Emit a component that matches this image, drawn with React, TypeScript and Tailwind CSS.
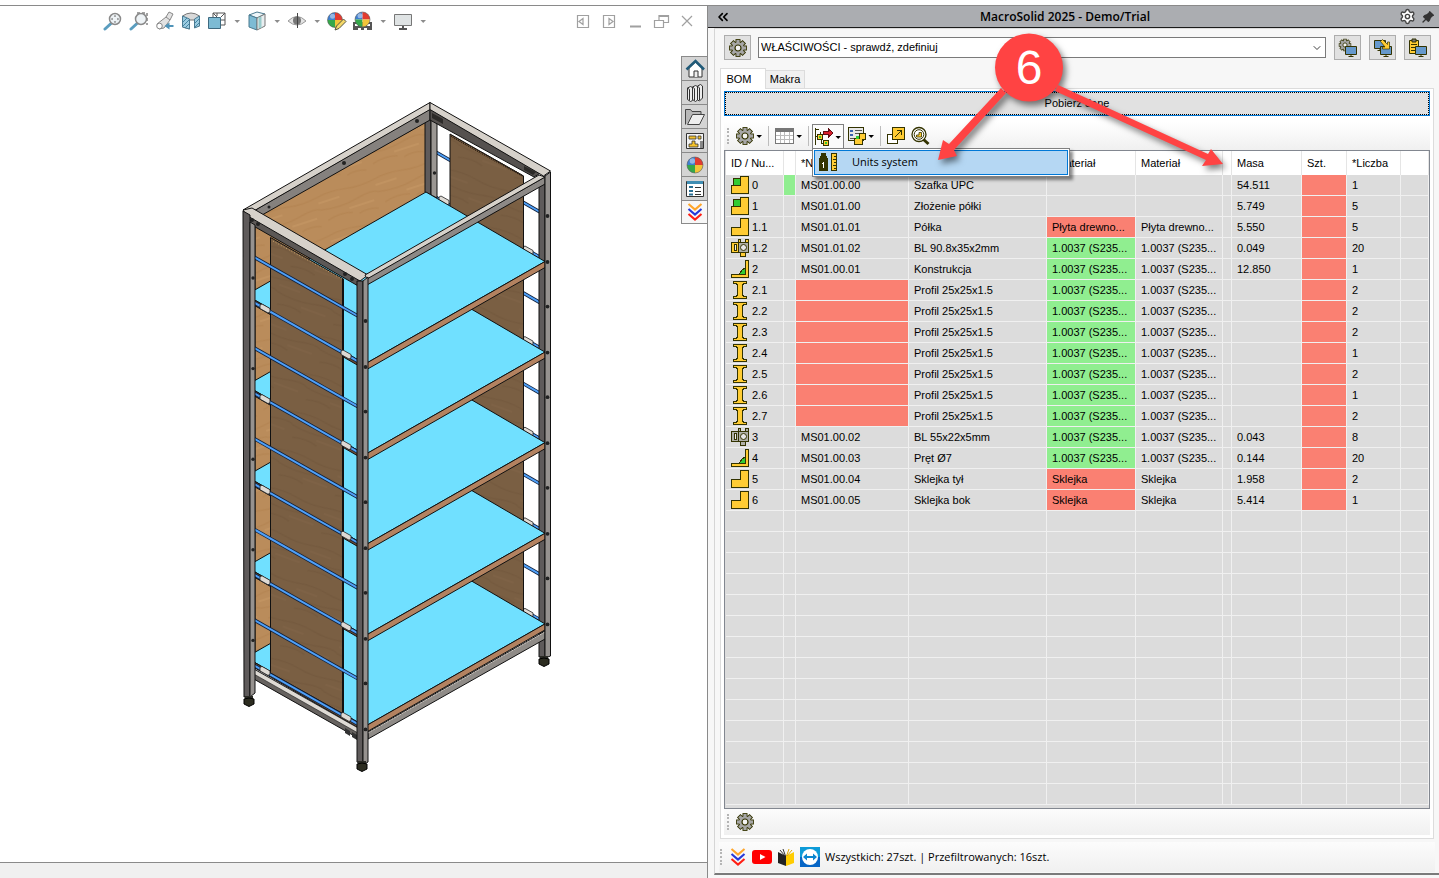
import { useState } from 'react';
import type { ReactNode } from 'react';
import { ChevronDown, ChevronsLeft, Settings } from 'lucide-react';
import { TbPinFilled } from 'react-icons/tb';

const OLIVE = '#333300';
const YELLOW = '#ffcc33';

type Kind = 'asm' | 'part' | 'buyYellow' | 'buy' | 'weld' | 'beam';
type Tone = '' | 'red' | 'green';

interface Row {
  id: string;
  kind: Kind;
  no: string;
  name: string;
  mat: string;
  tone: Tone;
  mass: string;
  qty: string;
}

const STEEL = '1.0037 (S235...';
const beam = (id: string, qty: string): Row => ({ id, kind: 'beam', no: '', name: 'Profil 25x25x1.5', mat: STEEL, tone: 'green', mass: '', qty });

const rows: Row[] = [
  { id: '0', kind: 'asm', no: 'MS01.00.00', name: 'Szafka UPC', mat: '', tone: '', mass: '54.511', qty: '1' },
  { id: '1', kind: 'asm', no: 'MS01.01.00', name: 'Złożenie półki', mat: '', tone: '', mass: '5.749', qty: '5' },
  { id: '1.1', kind: 'part', no: 'MS01.01.01', name: 'Półka', mat: 'Płyta drewno...', tone: 'red', mass: '5.550', qty: '5' },
  { id: '1.2', kind: 'buyYellow', no: 'MS01.01.02', name: 'BL 90.8x35x2mm', mat: STEEL, tone: 'green', mass: '0.049', qty: '20' },
  { id: '2', kind: 'weld', no: 'MS01.00.01', name: 'Konstrukcja', mat: STEEL, tone: 'green', mass: '12.850', qty: '1' },
  beam('2.1', '2'),
  beam('2.2', '2'),
  beam('2.3', '2'),
  beam('2.4', '1'),
  beam('2.5', '2'),
  beam('2.6', '1'),
  beam('2.7', '2'),
  { id: '3', kind: 'buy', no: 'MS01.00.02', name: 'BL 55x22x5mm', mat: STEEL, tone: 'green', mass: '0.043', qty: '8' },
  { id: '4', kind: 'weld', no: 'MS01.00.03', name: 'Pręt Ø7', mat: STEEL, tone: 'green', mass: '0.144', qty: '20' },
  { id: '5', kind: 'part', no: 'MS01.00.04', name: 'Sklejka tył', mat: 'Sklejka', tone: 'red', mass: '1.958', qty: '2' },
  { id: '6', kind: 'part', no: 'MS01.00.05', name: 'Sklejka bok', mat: 'Sklejka', tone: 'red', mass: '5.414', qty: '1' },
];

const toneClass: Record<Tone, string> = { '': '', red: 'bg-[#fa8072]', green: 'bg-[#90ee90]' };

/* ---------- small icons ---------- */

function Svg({ children, size = 20, crisp = false }: { children: ReactNode; size?: number; crisp?: boolean }) {
  return (
    <svg width={size} height={size} viewBox={`0 0 ${size} ${size}`} className="shrink-0" shapeRendering={crisp ? 'crispEdges' : undefined} aria-hidden="true">
      {children}
    </svg>
  );
}

function GearShape({ cx, cy, s = 1 }: { cx: number; cy: number; s?: number }) {
  const teeth = [0, 45, 90, 135, 180, 225, 270, 315];
  const body = (
    <>
      <circle r="5.800" />
      {teeth.map((a) => <rect key={a} x="-1.6" y="-8" width="3.2" height="4" transform={`rotate(${a})`} />)}
    </>
  );
  return (
    <g transform={`translate(${cx} ${cy}) scale(${s})`}>
      <g fill={OLIVE} stroke={OLIVE} strokeWidth="1.8">{body}</g>
      <g fill="#a6a6a6">{body}</g>
      <circle r="3" fill="#f4f4f4" stroke={OLIVE} strokeWidth="1.2" />
    </g>
  );
}

const Gear = () => <Svg><GearShape cx={10} cy={10} /></Svg>;

function Caret({ className = 'text-black' }: { className?: string }) {
  return (
    <svg width="8" height="8" viewBox="0 0 8 8" className={className} aria-hidden="true">
      <path d="M1.500 3h5.500L4.200 6z" fill="currentColor" />
    </svg>
  );
}

function Chevrons({ size = 20 }: { size?: number }) {
  return (
    <svg width={size} height={size} viewBox="0 0 20 20" fill="none" strokeWidth="2.1" className="shrink-0" aria-hidden="true">
      <path d="M3.5 2l6.500 5.500L16.500 2" stroke="#ffa62b" />
      <path d="M3.500 7l6.500 5.500L16.500 7" stroke="#2638d8" />
      <path d="M3.500 12l6.500 5.500L16.500 12" stroke="#ff1e14" />
    </svg>
  );
}

function Sphere({ cx = 10, cy = 10, r = 8 }: { cx?: number; cy?: number; r?: number }) {
  return (
    <g transform={`translate(${cx} ${cy})`}>
      <path d={`M0 0V${-r}A${r} ${r} 0 0 0 ${-r} 0z`} fill="#3f7fd0" />
      <path d={`M0 0V${-r}A${r} ${r} 0 0 1 ${r} 0z`} fill="#e23b30" />
      <path d={`M0 0V${r}A${r} ${r} 0 0 1 ${-r} 0z`} fill="#35a84a" />
      <path d={`M0 0V${r}A${r} ${r} 0 0 0 ${r} 0z`} fill="#f2c53a" />
      <circle cx={-r / 3} cy={-r / 2} r={r / 3} fill="#fff" opacity=".45" />
      <circle r={r} fill="none" stroke="#555" strokeWidth=".8" opacity=".7" />
    </g>
  );
}

function RowIcon({ kind }: { kind: Kind }) {
  return (
    <svg width="18" height="18" viewBox="0 0 18 18" className="shrink-0" shapeRendering="crispEdges" stroke={OLIVE} fill={YELLOW} aria-hidden="true">
      {(kind === 'part' || kind === 'asm') && <path d="M.5 9.500h9v-9h8v17H.500z" />}
      {kind === 'asm' && <path d="M2.500 2.500h7v7h-7z" fill="#33cc33" />}
      {kind === 'beam' && <path d="M2.500.500h13v2h-2l-2 1v11l2 1h2v2h-13v-2h2l2-1v-11l-2-1h-2z" />}
      {kind === 'weld' && (
        <>
          <path d="M14.500.500h3v17H.500v-3h14z" />
          <path d="M14.500 8v6.500H8.500c1-3 3-5.500 6-6.500z" fill="#33cc33" />
        </>
      )}
      {(kind === 'buy' || kind === 'buyYellow') && (
        <>
          <path d="M.500 3.500h7v10h-7z" fill={kind === 'buy' ? '#b0b0a8' : YELLOW} />
          <path d="M3.500 5.500h2v6h-2z" fill="#eee" />
          <path d="M7.500.500h2v3h5v-3h3v13h-3v4h-5v-4h-2z" fill={kind === 'buy' ? '#b0b0a8' : YELLOW} />
          <path d="M7.500 3.500h10v10h-10z" fill="#b0b0a8" />
          <circle cx="12.500" cy="8.500" r="3" fill="#e6e6e6" shapeRendering="auto" />
        </>
      )}
    </svg>
  );
}

const Monitor = ({ x, y }: { x: number; y: number }) => (
  <g stroke={OLIVE}>
    <path d={`M${x} ${y}h11v8h-11z`} fill="#6699cc" />
    <path d={`M${x + 5.5} ${y + 8}v2M${x + 3} ${y + 10}h5`} fill="none" />
  </g>
);

/* ---------- left viewport toolbar ---------- */

const lens = (
  <>
    <path d="M2 18l6-5.500" stroke="#5a9dbf" strokeWidth="3" strokeLinecap="round" />
    <circle cx="12" cy="8" r="5.500" fill="#eef3f6" stroke="#8a8a8a" strokeWidth="1.500" />
  </>
);

const viewTools: { label: string; menu?: boolean; icon: ReactNode }[] = [
  { label: 'Zoom to Fit', icon: <>{lens}<path d="M12 4l1.200 1.500h-2.400zM12 12l1.200-1.500h-2.400zM8 8l1.500-1.200v2.400zM16 8l-1.500-1.200v2.400z" fill="#555" /></> },
  { label: 'Zoom to Area', icon: <><path d="M8 2h10v12" fill="none" stroke="#444" strokeDasharray="3 2" />{lens}</> },
  { label: 'Previous View', icon: <><path d="M2 13l9-7 3-5 4 2-3 6-6 8-5 1z" fill="#e2e2e2" stroke="#888" /><path d="M11 6l4 3" stroke="#888" /><circle cx="4.500" cy="15" r="2.800" fill="#fff" stroke="#888" /><path d="M18.500 14h-4v-2.500L9.500 15l5 3.500V16h4z" fill="#4f93b8" /></> },
  { label: 'Section View', icon: <><path d="M1.500 5q8.500-6 17 0v10l-5 1V9h-5v9l-7-2z" fill="#d9d9d9" stroke="#777" /><path d="M1.500 5l7 3v10l-7-2zM13.500 8l5-3v10l-5 2z" fill="#9ccbe0" stroke="#4a7a92" /><path d="M2 11l4-4M2 15l6-6M4 17l4-4M14 12l4-4M14 16l4-4" stroke="#4585a3" /></> },
  { label: 'View Orientation', menu: true, icon: <><path d="M6 6V2h12v12h-4M14 6l4-4M6 2l4 4M10 2v3M14 9h4" fill="none" stroke="#555" /><path d="M1.500 6.500h12v11h-12z" fill="#7dbbd4" stroke="#3e6a80" /></> },
  { label: 'Display Style', menu: true, icon: <><path d="M2 4l8-3 8 2-8 4z" fill="#eef6f9" stroke="#4b7a8f" /><path d="M2 4l8 3v12l-8-3z" fill="#7dbbd4" stroke="#4b7a8f" /><path d="M10 7l8-4v12l-8 4z" fill="#e9eef0" stroke="#777" /><path d="M13 6v11" stroke="#9cc" strokeWidth="3" /></> },
  { label: 'Hide/Show Items', menu: true, icon: <><path d="M1 10q9-9 18 0-9 8-18 0z" fill="#e4e4e4" stroke="#999" /><circle cx="10" cy="9.500" r="4" fill="#777" /><path d="M10.500 2v15" stroke="#444" /></> },
  { label: 'Edit Appearance', icon: <><Sphere cx={8} cy={9} r={7.500} /><path d="M8 19l1.500-4 7-7 2.500 2.500-7 7z" fill="#f4d868" stroke="#554" /></> },
  { label: 'Apply Scene', menu: true, icon: <><path d="M0 11h19v8H0z" fill="#555" /><path d="M2 13h3v2H2zM5 17h3v2H5zM14 13h3v2h-3zM11 17h3v2h-3z" fill="#fff" /><Sphere cx={9.500} cy={8.500} r={7.500} /></> },
  { label: 'View Settings', menu: true, icon: <><path d="M1.500 3.500h17v11h-17z" fill="#dfe3e4" stroke="#777" /><path d="M10 15v3M6 18h8" stroke="#555" strokeWidth="2" /></> },
];

const windowTools: { label: string; d: string }[] = [
  { label: 'Previous pane', d: 'M4.500 4.500h11v12h-11zM10 7.500v6l-4-3z' },
  { label: 'Next pane', d: 'M4.500 4.500h11v12h-11zM10 7.500v6l4-3z' },
  { label: 'Minimize', d: 'M5 16h11M5 15h11' },
  { label: 'Restore', d: 'M3.500 9.500h9v7h-9zM8 9V4.500h9.500v7H13M8 5.500h9' },
  { label: 'Close', d: 'M5 5l10 10M15 5L5 15' },
];

const taskTabs: { label: string; icon: ReactNode }[] = [
  { label: 'Home', icon: <><path d="M4 9v9h13V9l-6.500-6z" fill="#fff" stroke="#333" /><path d="M9 18v-6h4v6" fill="#eee" stroke="#333" /><path d="M1.500 10.500l9-8.500 8.500 8.500" fill="none" stroke="#205a78" strokeWidth="2.600" /></> },
  { label: 'Design Library', icon: <g fill="#eee" stroke="#333"><path d="M2.500 5l3-1.500 2 1v13l-2 1-3-2z" /><path d="M7.500 4l3-1.500 2 1v13.500l-2 1.500-3-2z" /><path d="M12.500 3l3-1.500 2 1.500v12l-3 3-2-1z" /><path d="M2.500 5l2 1.500v11M7.500 4l2 1.500v12M12.500 3l2 2v12" fill="none" /></g> },
  { label: 'File Explorer', icon: <><path d="M.500 17.500v-15h5l1.500 2h9v4" fill="#b8b8b8" stroke="#444" /><path d="M2.500 17.500l5-10h12l-5 10z" fill="#eee" stroke="#444" /></> },
  { label: 'View Palette', icon: <><path d="M1.500 2.500h17v15h-17z" fill="#f3f3f3" stroke="#333" /><path d="M4 5h7v3H4zM13 5h3v3h-3zM7 10h3v3h3v3H4v-3h3z" fill="#f5c32c" stroke="#333" strokeWidth=".8" /><path d="M15 10h3v7h-3z" fill="#888" /></> },
  { label: 'Appearances', icon: <Sphere /> },
  { label: 'Custom Properties', icon: <><path d="M1.500 2.500h17v15h-17z" fill="#fff" stroke="#333" /><path d="M2 2h16v3H2z" fill="#3f8db3" /><path d="M4 7h4v2H4zM4 11h4v2H4zM4 14.500h4v2H4z" fill="#2a6f93" /><path d="M10 8.500h6M10 12.500h6M10 15.500h6" stroke="#333" /></> },
  { label: 'MacroSolid', icon: <Chevrons /> },
];

/* ---------- 3D model of the cabinet ---------- */

const PITCH = 90.6;
const shelves = [4, 3, 2, 1, 0].map((i) => i * PITCH);
const rodSteps = [0, 1, 2, 3, 4, 5, 6, 7, 8, 9];

function Rod({ x1, y1, x2, y2 }: { x1: number; y1: number; x2: number; y2: number }) {
  return (
    <>
      <path d={`M${x1} ${y1}L${x2} ${y2}`} stroke="#10203c" strokeWidth="3.600" />
      <path d={`M${x1} ${y1}L${x2} ${y2}`} stroke="#4fa0f8" strokeWidth="2" />
    </>
  );
}

function Clip({ x, y }: { x: number; y: number }) {
  return <path d={`M${x} ${y}l8 4.500v3.500l-2 1-8-4.500V${y + 1}z`} fill="#dedad4" stroke="#222" strokeWidth=".8" />;
}

function Foot({ x, y }: { x: number; y: number }) {
  return (
    <>
      <path d={`M${x - 4} ${y - 3}h8v5h-8z`} fill="#2a2a24" />
      <path d={`M${x - 5} ${y}l5-1 5 1v5l-5 2.500-5-2.500z`} fill="#2c2c20" stroke="#000" />
    </>
  );
}

function CabinetModel() {
  return (
    <svg viewBox="0 56 681 806" preserveAspectRatio="xMinYMin meet" className="h-full w-full" role="img" aria-label="Szafka UPC" strokeLinejoin="round">
      <defs>
        <pattern id="oak" width="60" height="40" patternUnits="userSpaceOnUse" patternTransform="rotate(-18)">
          <rect width="60" height="40" fill="#ba8c5b" />
          <path d="M0 6q15-3 30 0t30 0M0 19q20 4 38 0t22 0M4 31q14-4 26 0M36 34q10-3 20 1" fill="none" stroke="#aa7a48" strokeWidth="1.400" opacity=".35" />
          <path d="M0 12h22M28 26h26" stroke="#cb9c69" strokeWidth="2" opacity=".4" />
        </pattern>
        <pattern id="walnut" width="60" height="40" patternUnits="userSpaceOnUse" patternTransform="rotate(20)">
          <rect width="60" height="40" fill="#7a5f43" />
          <path d="M0 6q15-3 30 0t30 0M0 19q20 4 38 0t22 0M4 31q14-4 26 0" fill="none" stroke="#6b4f34" strokeWidth="1.400" opacity=".3" />
          <path d="M0 12h22M28 26h26" stroke="#86694a" strokeWidth="2" opacity=".3" />
        </pattern>
      </defs>

      {/* back side: rods, plywood sheets and the rear post */}
      {rodSteps.map((k) => <Rod key={k} x1={434} y1={151 + k * 45.3} x2={540} y2={212 + k * 45.3} />)}
      {shelves.map((dy) => <g key={dy}><Clip x={441} y={196 + dy} /><Clip x={525} y={246 + dy} /></g>)}
      <path d="M450 134l73.500 42v450l-73.500-42z" fill="url(#walnut)" stroke="#111" />
      <path d="M255 217l171-95v450l-171 95z" fill="url(#oak)" stroke="#111" />
      <path d="M425 116h6v79l-6-3z" fill="#5f5b5b" stroke="#111" />
      <path d="M431 116h6v82l-6-3z" fill="#9b9793" stroke="#111" />
      <circle cx="434.500" cy="173" r="1.700" fill="#222" />
      <path d="M539 180h6v477h-6z" fill="#5f5b5b" stroke="#111" />

      {shelves.map((dy) => (
        <g key={dy} transform={`translate(0 ${dy})`} stroke="#111">
          <path d="M426 192l119 69.500L365 364 246 295z" fill="#70e0ff" />
          <path d="M545 261.500v6L365 370.500V364z" fill="#b38260" />
          <path d="M246 295l119 69v5.500L246 300.500z" fill="#6e4f35" />
        </g>
      ))}

      {/* bottom frame */}
      <path d="M368 732l177-101v8L368 739z" fill="#8f8b87" stroke="#111" />
      <path d="M368 733l177-101" stroke="#c9c5c0" strokeDasharray="2 1" />
      <path d="M252 668l106 60v10l-106-60z" fill="#66625f" stroke="#111" />
      <path d="M252 668l106 60v5l-106-60z" fill="#dedad4" stroke="#111" strokeWidth=".6" />
      <path d="M345 728l5 3v5l-5-3zM352 732l5 3v5l-5-3zM251 674l4 2v4l-4-2z" fill="#333" />

      {/* left side panel */}
      <path d="M270.500 237.500l73 41.500v435l-73-41z" fill="url(#walnut)" stroke="#111" />
      <path d="M343 279v434" stroke="#111" strokeWidth="2" />
      {rodSteps.map((k) => <Rod key={k} x1={252} y1={256 + k * 45.35} x2={358} y2={316 + k * 45.35} />)}
      {shelves.map((dy) => <g key={dy}><Clip x={262} y={304 + dy} /><Clip x={343} y={350 + dy} /></g>)}

      {/* top frame */}
      <path d="M250 213l180-104v11l-175 99z" fill="#85817e" stroke="#111" />
      <path d="M430 109l112 63-8 5-104-57z" fill="#55514f" stroke="#111" />
      <path d="M243 210l187-107.500v7L252 212z" fill="#d6d1ca" stroke="#111" />
      <path d="M430 102.500L550.500 171l-7 5L430 109.500z" fill="#d6d1ca" stroke="#111" />
      <path d="M246 214l114 66v7l-110-63z" fill="#5c5856" stroke="#111" />
      <path d="M243 210l9-2 116 67-8 6-114-66z" fill="#d6d1ca" stroke="#111" />
      <path d="M367 278l178-101v7L367 285z" fill="#8d8986" stroke="#111" />
      <path d="M365 275l174-100 6 2-178 102z" fill="#d6d1ca" stroke="#111" />
      <path d="M432 113l11 6v5l-11-6zM524 166l12 6-3 3-9-5z" fill="#2c2a28" />
      <path d="M273 241l69 38" stroke="#c9a36b" strokeDasharray="1 2" />
      <path d="M451 136l72 40" stroke="#2c1d10" strokeWidth="2" strokeDasharray="1 1" />
      <g fill="#222">
        <circle cx="252" cy="220" r="2" /><circle cx="258" cy="224" r="2" /><circle cx="345" cy="274" r="2" />
        <circle cx="352" cy="279" r="2" /><circle cx="344" cy="163" r="2" /><circle cx="417" cy="121" r="2" /><circle cx="269" cy="207" r="1.500" />
      </g>

      {/* posts */}
      <path d="M243 211l7 4v482h-6z" fill="#5f5b5b" stroke="#111" />
      <path d="M250 222l5 3v468l-5 4z" fill="#96928f" stroke="#111" />
      <path d="M357 281h6v484l-6-3z" fill="#5f5b5b" stroke="#111" />
      <path d="M363 281l5-4v485l-5 3z" fill="#96928f" stroke="#111" />
      <path d="M545 176l5.500-4v484l-5.500 2z" fill="#96928f" stroke="#111" />
      <g fill="#222">
        {shelves.map((dy) => (
          <g key={dy}>
            <circle cx="253" cy={278 + dy} r="1.700" />
            <circle cx="365.500" cy={321 + dy} r="1.900" />
            <circle cx="365.500" cy={367 + dy} r="1.900" />
            <circle cx="547.500" cy={216 + dy} r="1.900" />
            <circle cx="547.500" cy={262 + dy} r="1.900" />
          </g>
        ))}
      </g>
      <Foot x={249} y={699} />
      <Foot x={362} y={764} />
      <Foot x={544} y={659} />
    </svg>
  );
}

function Viewport() {
  return (
    <section className="flex min-w-0 flex-col border-r border-[#8a8a8a] bg-white">
      <div className="flex h-[50px] shrink-0 items-start justify-between pt-[5px] pr-[10px] pl-[103px]">
        <div className="flex items-center gap-1.5">
          {viewTools.map((tool) => (
            <button key={tool.label} type="button" aria-label={tool.label} className="flex items-center gap-1.5">
              <Svg>{tool.icon}</Svg>
              {tool.menu && <Caret className="text-[#8c8c8c]" />}
            </button>
          ))}
        </div>
        <div className="flex items-center gap-1.5">
          {windowTools.map((tool) => (
            <button key={tool.label} type="button" aria-label={tool.label}>
              <Svg><path d={tool.d} fill="none" stroke="#a0a0a0" strokeWidth="1.200" /></Svg>
            </button>
          ))}
        </div>
      </div>
      <div className="flex min-h-0 flex-1">
        <div className="min-w-0 flex-1"><CabinetModel /></div>
        <nav className="w-[26px] shrink-0">
          {taskTabs.map((tab, i) => (
            <button
              key={tab.label}
              type="button"
              aria-label={tab.label}
              className={`flex h-6 w-full items-center justify-center border-t border-l border-[#8a8a8a] ${i === taskTabs.length - 1 ? 'border-b bg-[#f7f7f7]' : 'bg-[#d4d4d4]'}`}
            >
              <Svg>{tab.icon}</Svg>
            </button>
          ))}
        </nav>
      </div>
      <div className="h-4 shrink-0 border-t border-[#8a8a8a] bg-[#f0f0f0]" />
    </section>
  );
}

/* ---------- MacroSolid panel ---------- */

const Grip = () => <span className="h-4 w-0.5 shrink-0 border-l-2 border-dotted border-[#b5b5b5]" />;
const Divider = () => <span className="mr-[3px] ml-[5px] h-5 w-px shrink-0 bg-[#bdbdbd]" />;

function BomToolbar() {
  const [menuOpen, setMenuOpen] = useState(true);
  return (
    <div className="mt-1.5 flex h-7 shrink-0 items-center bg-linear-to-b from-white to-[#f0f0f0] pl-[3px]">
      <Grip />
      <button type="button" aria-label="Ustawienia" className="ml-1.5 flex items-center"><Gear /><Caret /></button>
      <Divider />
      <button type="button" aria-label="Tabela" className="ml-[3px] flex items-center">
        <Svg crisp>
          <path d="M.500 2.500h18v15H.500z" fill="#fff" stroke="#777" />
          <path d="M1 3h17v3H1z" fill="#777" />
          <path d="M1 9.500h17M1 13.500h17M5.500 6v11M9.500 6v11M14.500 6v11" stroke="#bbb" />
        </Svg>
        <Caret />
      </button>
      <Divider />
      <div className="relative">
        <button type="button" aria-label="Struktura" onClick={() => setMenuOpen(!menuOpen)} className="flex h-[25px] items-center border border-b-0 border-[#808080] bg-[#fbfbfb] px-px">
          <Svg crisp>
            <path d="M1.500 1v17M1.500 2.500h3M1.500 9.500h2M7.500 12v4.500h2M6.500 5v3" stroke={OLIVE} fill="none" />
            <path d="M3.500 7.500h5v5h-5zM9.500 13.500h5v5h-5z" fill={YELLOW} stroke={OLIVE} />
            <path d="M5 9h2v2H5zM11 15h2v2h-2z" fill="#33cc33" />
            <path d="M9.500 4.500h5v-2.500l4.500 4-4.500 4v-2.500h-5z" fill="#d81e2c" stroke="#5c0d12" />
          </Svg>
          <Caret />
        </button>
        {menuOpen && (
          <div role="menu" className="absolute top-6 left-0 z-10 w-[258px] border border-[#808080] bg-white p-px shadow-[3px_3px_3px_rgba(0,0,0,0.45)]">
            <button type="button" role="menuitem" className="flex h-[25px] w-full items-center border border-[#0078d7] bg-[#b5d7f3] pl-[3px] font-['Open_Sans',sans-serif] text-[11px] text-black">
              <Svg crisp>
                <path d="M3 1h5v3H3zM2 4h7v3H2z" fill={OLIVE} />
                <path d="M1 6h9v13H1z" fill={OLIVE} />
                <path d="M5 10h1v6H5zM4 11h1v1H4z" fill="#fff" />
                <path d="M13.500 1.500h5v17h-5z" fill={YELLOW} stroke={OLIVE} />
                <path d="M16 4.500h2M15 7.500h3M16 10.500h2M15 13.500h3M16 16.500h2" stroke={OLIVE} />
              </Svg>
              <span className="ml-[14px]">Units system</span>
            </button>
          </div>
        )}
      </div>
      <button type="button" aria-label="Właściwości" className="ml-[3px] flex items-center">
        <Svg crisp>
          <path d="M1.500 1.500h15v13h-15z" fill="#e8e8e8" stroke={OLIVE} />
          <path d="M3 4h3v2H3zM3 8h3v2H3z" fill="#3a62b0" />
          <path d="M8 4.500h7M8 7.500h4M3 12.500h4" stroke="#555" />
          <path d="M7.500 12.500h5v-5h6v6h-3v5h-8z" fill={YELLOW} stroke={OLIVE} />
          <path d="M9 10h3v3H9z" fill="#33cc33" />
        </Svg>
        <Caret />
      </button>
      <Divider />
      <button type="button" aria-label="Otwórz" className="ml-0.5">
        <Svg crisp>
          <path d="M1.500 8.500h10v9h-10z" fill="#fff" stroke={OLIVE} />
          <path d="M6.500 1.500h12v12h-12z" fill={YELLOW} stroke={OLIVE} />
          <path d="M9 11l6-6M11 4.500h4.500V9" fill="none" stroke={OLIVE} />
        </Svg>
      </button>
      <button type="button" aria-label="Szukaj" className="ml-1">
        <Svg>
          <path d="M13 13l5.500 5" stroke={OLIVE} strokeWidth="3" />
          <circle cx="9" cy="8.500" r="7" fill="#fff" stroke={OLIVE} strokeWidth="1.300" />
          <circle cx="9" cy="8.500" r="4.800" fill="none" stroke={OLIVE} />
          <path d="M6.500 9H9V6.500h2.500V11h-5z" fill={YELLOW} stroke={OLIVE} strokeWidth=".8" />
        </Svg>
      </button>
    </div>
  );
}

const headers = ['ID / Nu...', '', '*Numer', '*Nazwa', '*Materiał', 'Materiał', '', 'Masa', 'Szt.', '*Liczba', ''];
const emptyRows = Array.from({ length: 14 }, (_, i) => i);
const cell = 'h-[21px] border-r border-b border-[#f0f0f0] p-0 pl-[5px] whitespace-nowrap overflow-hidden';

function BomTable() {
  return (
    <div className="min-h-0 flex-1 overflow-hidden border border-[#828790] bg-[#dcdcdc] pl-px">
      <table className="w-full table-fixed border-separate border-spacing-0">
        <colgroup>
          <col className="w-[58px]" />
          <col className="w-[12px]" />
          <col className="w-[113px]" />
          <col className="w-[138px]" />
          <col className="w-[89px]" />
          <col className="w-[87px]" />
          <col className="w-[9px]" />
          <col className="w-[70px]" />
          <col className="w-[45px]" />
          <col className="w-[54px]" />
          <col />
        </colgroup>
        <thead>
          <tr>
            {headers.map((h, i) => (
              <th key={i} className="h-6 overflow-hidden border-r border-[#e5e5e5] bg-white p-0 pl-[5px] text-left font-normal whitespace-nowrap">{h}</th>
            ))}
          </tr>
        </thead>
        <tbody>
          {rows.map((row) => (
            <tr key={row.id}>
              <td className={cell}>
                <span className="flex h-5 items-center gap-[3px]"><RowIcon kind={row.kind} />{row.id}</span>
              </td>
              <td className={`${cell} ${row.id === '0' ? 'bg-[#90ee90]' : ''}`} />
              <td className={`${cell} ${row.no ? '' : 'bg-[#fa8072]'}`}>{row.no}</td>
              <td className={cell}>{row.name}</td>
              <td className={`${cell} ${toneClass[row.tone]}`}>{row.mat}</td>
              <td className={cell}>{row.mat}</td>
              <td className={cell} />
              <td className={cell}>{row.mass}</td>
              <td className={`${cell} bg-[#fa8072]`} />
              <td className={cell}>{row.qty}</td>
              <td className={cell} />
            </tr>
          ))}
          {emptyRows.map((n) => (
            <tr key={n}>{headers.map((_, i) => <td key={i} className={cell} />)}</tr>
          ))}
        </tbody>
      </table>
    </div>
  );
}

function StatusBar() {
  return (
    <footer className="mx-1 mt-[3px] mb-px flex h-[30px] shrink-0 items-center bg-linear-to-b from-[#fcfcfc] to-[#f0f0f0] pl-px">
      <Grip />
      <a href="#macrosolid" aria-label="MacroSolid" className="ml-[6px]"><Chevrons /></a>
      <a href="#youtube" aria-label="YouTube" className="ml-1">
        <Svg><rect y="3" width="20" height="14" rx="3" fill="#f00" /><path d="M8 7l5.500 3L8 13z" fill="#fff" /></Svg>
      </a>
      <a href="#docs" aria-label="Dokumentacja" className="ml-1">
        <Svg>
          <path d="M2 5l8 4v10l-8-3z" fill="#222" />
          <path d="M18 5l-8 4v10l8-3z" fill="#fc0" />
          <path d="M4 3l5 6M7 2l2.500 7" stroke="#333" />
          <path d="M16 3l-5 6M13 2l-2.500 7" stroke="#e0a800" />
        </Svg>
      </a>
      <a href="#support" aria-label="Pomoc zdalna" className="ml-1">
        <Svg>
          <rect width="20" height="10" fill="#0e9bd8" />
          <rect y="10" width="20" height="10" fill="#0766c6" />
          <circle cx="10" cy="10" r="8" fill="#fff" />
          <path d="M3 10l4-3.500V9h6V6.500l4 3.500-4 3.500V11H7v2.500z" fill="#0a86d0" />
        </Svg>
      </a>
      <p className="ml-[5px] font-['Open_Sans',sans-serif] text-[11px]">Wszystkich: 27szt. | Przefiltrowanych: 16szt.</p>
    </footer>
  );
}

const squareButton = 'flex h-[25px] w-[27px] shrink-0 items-center justify-center border border-[#adadad] bg-[#e1e1e1]';

function Callout() {
  return (
    <svg width="300" height="150" viewBox="935 30 300 150" className="pointer-events-none absolute top-6 left-[227px] z-20 overflow-visible" aria-label="6">
      <g fill="#ff4343" style={{ filter: 'drop-shadow(3px 4px 3px rgba(0,0,0,.5))' }}>
        <path d="M1001 88l5 5-52 57 3 6-19 4 5-20 6 4z" />
        <path d="M1058 85l-3 6 151 69-4 6 21-2-12-15-3 5z" />
        <circle cx="1029" cy="67.500" r="34" />
      </g>
      <text x="1029" y="84" textAnchor="middle" fontSize="48" fill="#fff" fontFamily="Liberation Sans, sans-serif">6</text>
    </svg>
  );
}

function MacroPanel() {
  const [tab, setTab] = useState('BOM');
  return (
    <section className="relative flex min-w-0 flex-col bg-[#f7f7f7]">
      <header className="flex h-[22px] shrink-0 items-center border-b border-[#1a1a1a] bg-[#abadb1] pr-[3px] pl-[7px]">
        <button type="button" aria-label="Zwiń"><ChevronsLeft size={16} strokeWidth={2.500} /></button>
        <h1 className="flex-1 text-center font-['Open_Sans',sans-serif] text-[12px] font-semibold">MacroSolid 2025 - Demo/Trial</h1>
        <button type="button" aria-label="Opcje" className="mr-1"><Settings size={17} strokeWidth={2} stroke="#444" fill="#fff" /></button>
        <button type="button" aria-label="Przypnij"><TbPinFilled size={16} color="#333" /></button>
      </header>
      <div className="ml-1.5 flex min-h-0 flex-1 flex-col border-t border-b-2 border-l border-t-[#dcdcdc] border-b-[#7a7a7a] border-l-[#d5d5d5]">
        <div className="flex items-center pt-1.5 pr-2 pl-[9px]">
          <button type="button" aria-label="Ustawienia makra" className={squareButton}><Gear /></button>
          <div className="relative ml-[7px] min-w-0 flex-1">
            <select aria-label="Makro" className="block h-[21px] w-full appearance-none border border-[#7a7a7a] bg-white pl-[2px] text-[11px] text-black">
              <option>WŁAŚCIWOŚCI - sprawdź, zdefiniuj</option>
            </select>
            <ChevronDown size={12} strokeWidth={1.500} className="pointer-events-none absolute top-[5px] right-[3px]" />
          </div>
          <div className="ml-2 flex gap-2">
            <button type="button" aria-label="Opcje programu" className={squareButton}>
              <Svg><GearShape cx={7} cy={7} s={0.700} /><Monitor x={7.500} y={8.500} /></Svg>
            </button>
            <button type="button" aria-label="Przenieś" className={squareButton}>
              <Svg><Monitor x={1.500} y={2.500} /><Monitor x={7.500} y={8.500} /><path d="M7.500 3.500l2-2 5 5V4h2v7h-7V9h2.500z" fill={YELLOW} stroke={OLIVE} strokeWidth=".7" /></Svg>
            </button>
            <button type="button" aria-label="Wklej" className={squareButton}>
              <Svg><path d="M1.500 2.500h9v13h-9z" fill={YELLOW} stroke={OLIVE} /><path d="M4 1h4v3H4z" fill="#777" stroke={OLIVE} /><path d="M3 6.500h6M3 9.500h4M3 12.500h4" stroke={OLIVE} /><Monitor x={7.500} y={8.500} /></Svg>
            </button>
          </div>
        </div>

        <div role="tablist" className="mt-2 ml-[5px] flex items-end">
          <button type="button" role="tab" aria-selected={tab === 'BOM'} onClick={() => setTab('BOM')} className="relative z-[1] -mb-px h-[21px] w-[46px] border border-b-0 border-[#dcdcdc] bg-white pr-2 text-[11px]">BOM</button>
          <button type="button" role="tab" aria-selected={tab === 'Makra'} onClick={() => setTab('Makra')} className="h-[18px] w-[39px] border border-b-0 border-l-0 border-[#dcdcdc] bg-[#f0f0f0] text-[11px]">Makra</button>
        </div>

        <div className="mr-[5px] ml-[5px] flex min-h-0 flex-1 flex-col border border-[#dcdcdc] bg-white px-[3px] pt-[2px] pb-[3px]">
          <button type="button" className="h-[25px] shrink-0 border border-[#0078d7] bg-[#e1e1e1] p-0 text-[11px]">
            <span className="flex h-full items-center justify-center border border-dotted border-black">Pobierz dane</span>
          </button>
          <BomToolbar />
          <BomTable />
          <div className="flex h-[26px] shrink-0 items-center bg-linear-to-b from-[#fcfcfc] to-[#f0f0f0] pl-[3px]">
            <Grip />
            <button type="button" aria-label="Ustawienia BOM" className="ml-1.5"><Gear /></button>
          </div>
        </div>
        <StatusBar />
      </div>
      <div className="h-[3px] shrink-0" />
      <Callout />
    </section>
  );
}

export default function App() {
  return (
    <div className="flex h-screen flex-col overflow-hidden bg-white font-['Liberation_Sans',Arial,sans-serif] text-[11px] text-black">
      <div className="h-1.5 shrink-0 border-b border-[#8a8a8a]" />
      <main className="grid min-h-0 flex-1 grid-cols-[minmax(0,708fr)_minmax(0,731fr)]">
        <Viewport />
        <MacroPanel />
      </main>
    </div>
  );
}
